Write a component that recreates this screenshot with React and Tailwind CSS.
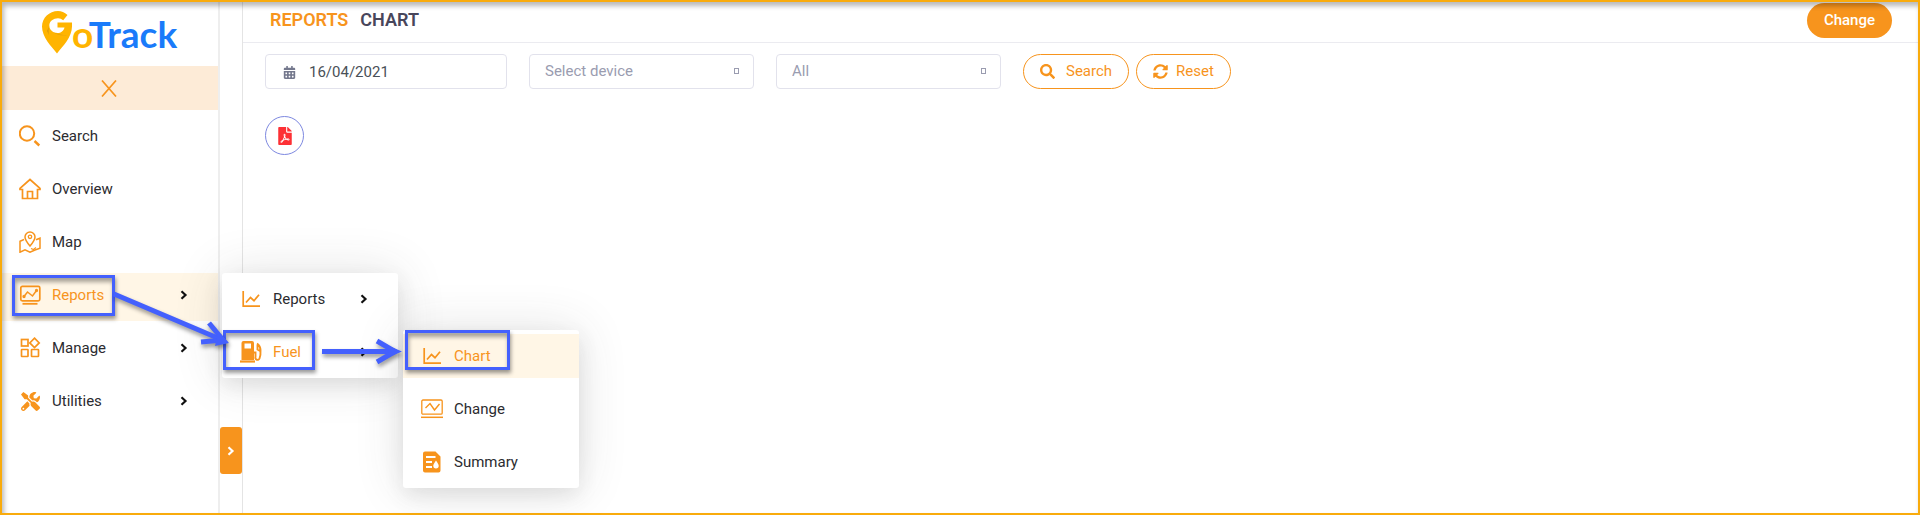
import React from "react";
import { FaSearch, FaSyncAlt, FaFilePdf, FaCalendarAlt, FaTools } from "react-icons/fa";

const Svg = ({ children, className = "", w = 22, h = 22 }) => (
  <svg width={w} height={h} viewBox={`0 0 ${w} ${h}`} fill="none" stroke="#f7941d" strokeWidth="1.700" className={`shrink-0 ${className}`} aria-hidden="true">
    {children}
  </svg>
);

const SearchIcon = () => (
  <Svg><circle cx="8" cy="8.500" r="7.200" strokeWidth="2" /><path d="M15.500 16l4.800 4.500" strokeWidth="2.400" /></Svg>
);
const HomeIcon = () => (
  <Svg><path d="M1 11.500v-1.200L11 1.500l10 8.800v1.200h-2.500V20.500h-15v-9H1z M8.500 20.500v-7h5v7" /></Svg>
);
const MapIcon = () => (
  <Svg>
    <path d="M11 15C8 11.500 6 8.800 6 6a5 5 0 0 1 10 0c0 2.800-2 5.500-5 9z" strokeWidth="1.500" />
    <circle cx="11" cy="5.800" r="1.700" strokeWidth="1.300" />
    <path d="M5 8.500L1 10.200v11l5-2.400 5 2.400 5-2.200 5-1.800V7.200l-4 1.600" strokeWidth="1.500" />
    <path d="M12 17.500l2.500 1 2.500-2" strokeWidth="1.100" />
  </Svg>
);
const MonitorIcon = () => (
  <Svg><rect x="1.800" y="2.300" width="19" height="14.500" rx="1.500" /><path d="M3.500 19.800h15" strokeWidth="1.800" /><path d="M5 12.500l3.500-4.500 5 4 4-5.500" strokeWidth="1.500" /><circle cx="5" cy="12.500" r=".8" fill="#f7941d" /><circle cx="17.500" cy="6.500" r=".8" fill="#f7941d" /></Svg>
);
const ManageIcon = () => (
  <Svg><rect x="2.500" y="2.500" width="6.500" height="6.500" /><path d="M15.500 1.200l4.700 4.700-4.700 4.700-4.700-4.700z" /><rect x="2.500" y="12.500" width="6.500" height="7" rx=".5" /><rect x="12.500" y="12.500" width="7" height="7" rx=".5" /></Svg>
);
const ToolsIcon = () => <span className="flex w-[22px] shrink-0 justify-center text-[19px] text-[#f7941d]"><FaTools aria-hidden="true" /></span>;
const ChartIcon = () => (
  <Svg><path d="M3.200 3v15.200H20" /><path d="M6 14.500l4.500-5 3.500 3.200 5-6" /></Svg>
);
const FuelIcon = () => (
  <Svg>
    <path fill="#f7941d" stroke="none" fillRule="evenodd" d="M3.500 0h8.500a2 2 0 0 1 2 2v17H1.500V2a2 2 0 0 1 2-2zM4.500 2.500v5h6.500v-5z" />
    <path d="M0 20.500h15" strokeWidth="2.200" />
    <path d="M14 11.500h1.500v4.500a2 2 0 0 0 4 1.500c.8-2 1.200-5 1-8.500 0-2-1-4.500-3.500-6.500M17.500 4v4.500l2.500 1.500" strokeWidth="1.900" />
  </Svg>
);
const ChangeIcon = () => (
  <Svg><rect x=".8" y="2" width="20.400" height="14.200" rx="1.200" strokeWidth="1.300" /><path d="M0 19.300h22" strokeWidth="1.500" /><path d="M4.500 10l4.500-4.500 4.500 6.500 5-6" strokeWidth="1.400" /></Svg>
);
const SummaryIcon = () => (
  <Svg>
    <path d="M4 .5h10.500l5 5V19.500a2 2 0 0 1-2 2H4a2 2 0 0 1-2-2V2.500a2 2 0 0 1 2-2z" fill="#f7941d" stroke="none" />
    <path d="M5 6h9.500M5 11h6M5 16h6" stroke="#fff" strokeWidth="1.800" />
    <path d="M15 9.500c1.800 2.600 2.700 4 2.700 5.300a2.700 2.700 0 0 1-5.400 0c0-1.300.9-2.700 2.700-5.300z" fill="#fff" stroke="none" />
  </Svg>
);
const Chevron = ({ color = "#111" }) => (
  <svg width="8" height="10" viewBox="0 0 8 10" fill="none" stroke={color} strokeWidth="2.200" className="shrink-0" aria-hidden="true">
    <path d="M1.500 1.200L5.500 5l-4 3.800" />
  </svg>
);

const Logo = () => (
  <a href="#" aria-label="GoTrack" className="flex h-16 items-start pt-2 pl-10 leading-none no-underline">
    <svg width="30" height="44" viewBox="0 0 30 44" aria-hidden="true" className="shrink-0">
      <path fill="#ffb400" d="M25.500 5C22.500 2.200 19.500 1 16 1 7.200 1 0 8 0 16.500 0 27 9 36 15 43.500 21 36 30 27 30 16.500V12.500H15.500v5h7c-.8 3.500-3.500 5.500-7 5.500-4.500 0-8.200-3.200-8.200-7.500S11.500 8.200 16 8.200c2 0 3.700.7 5.200 2z" />
      <path fill="#d99a10" d="M7.300 15.500c-.8 3-1 6.500-.3 9.500l-2-4zM11 22c4 2.500 9 3 14.500 3-5 .8-10.500.2-14.500-3z" />
    </svg>
    <span className="mt-1 font-[Lato,sans-serif] text-[37px] leading-10 font-bold text-[#1a7bfa]"><span className="text-[#ffb400]">o</span>Track</span>
  </a>
);

const itemText = "text-[15px] leading-5";

function NavItem({ icon, label, arrow, active, children }) {
  return (
    <li className="relative">
      <a href="#" className={`flex h-12 items-center gap-[11px] pr-[30px] pb-1 pl-[17px] ${itemText} ${active ? "bg-[#fff6e6] text-[#f7941d]" : "text-[#2b2b2f]"}`}>
        {icon}
        <span className="flex-1">{label}</span>
        {arrow && <Chevron />}
      </a>
      {children}
    </li>
  );
}

function SubItem({ icon, label, arrow, active, filled, children }) {
  return (
    <li className="relative">
      <a href="#" className={`flex h-11 items-center gap-[11px] pr-[30px] pl-[18px] ${itemText} ${filled ? "bg-[#fff6e6]" : ""} ${active ? "text-[#f7941d]" : "text-[#2b2b2f]"}`}>
        {icon}
        <span className="flex-1">{label}</span>
        {arrow && <Chevron />}
      </a>
      {children}
    </li>
  );
}

const menu = "absolute z-10 flex w-44 flex-col gap-[9px] rounded-[3px] bg-white py-1 shadow-[0_0_50px_rgba(60,60,60,0.14),0_8px_20px_rgba(60,60,60,0.1)]";

function SelectBox({ label, text }) {
  return (
    <div className="relative w-[225px]">
      <select aria-label={label} className="h-[35px] w-full appearance-none rounded border border-[#e2e2ec] bg-white px-[15px] text-[15px] text-[#9a9cb0]">
        <option>{text}</option>
      </select>
      <svg width="6" height="7" viewBox="0 0 6 7" className="pointer-events-none absolute top-[14px] right-[14px]" fill="none" stroke="#9a9cb0" aria-hidden="true">
        <rect x=".5" y=".5" width="4" height="5" />
      </svg>
    </div>
  );
}

const mark = "pointer-events-none absolute z-20 border-[3px] border-[#4460fd] shadow-[1px_3px_4px_rgba(0,0,0,0.4),inset_1px_4px_4px_rgba(0,0,0,0.35)]";
const pill = "flex h-[35px] items-center rounded-full border border-[#f7941d] bg-white text-[15px] text-[#f7941d]";

export default function App() {
  return (
    <div className="relative flex min-h-screen border-2 border-[#f9ab0c] bg-white font-[Roboto,sans-serif]">
      <aside className="w-[218px] shrink-0 border-r-2 border-[#eeeeee]">
        <Logo />
        <button type="button" aria-label="Close menu" className="flex h-11 w-full items-center justify-center bg-[#fdebd7] pr-0.5">
          <Svg w={16} h={17}><path d="M1 .5l14 16M15 .5L1 16.500" /></Svg>
        </button>
        <nav aria-label="Main">
          <ul className="flex flex-col gap-[5px] pt-1">
            <NavItem icon={<SearchIcon />} label="Search" />
            <NavItem icon={<HomeIcon />} label="Overview" />
            <NavItem icon={<MapIcon />} label="Map" />
            <NavItem icon={<MonitorIcon />} label="Reports" arrow active>
              <ul className={`${menu} top-0 left-[220px]`}>
                <SubItem icon={<ChartIcon />} label="Reports" arrow />
                <SubItem icon={<FuelIcon />} label="Fuel" arrow active>
                  <ul className={`${menu} top-0 left-[181px]`}>
                    <SubItem icon={<ChartIcon />} label="Chart" active filled />
                    <SubItem icon={<ChangeIcon />} label="Change" />
                    <SubItem icon={<SummaryIcon />} label="Summary" />
                  </ul>
                </SubItem>
              </ul>
            </NavItem>
            <NavItem icon={<ManageIcon />} label="Manage" arrow />
            <NavItem icon={<ToolsIcon />} label="Utilities" arrow />
          </ul>
        </nav>
      </aside>

      <div className="flex w-[23px] shrink-0 flex-col border-r border-[#e4e4e4]">
        <button type="button" aria-label="Expand panel" className="mt-auto mb-[39px] flex h-[47px] w-full items-center justify-center rounded-[3px] bg-[#f7941d]">
          <Chevron color="#fff" />
        </button>
      </div>

      <main className="min-w-0 flex-1">
        <header className="flex h-[41px] items-center justify-between border-b border-[#ebebf0] pr-[26px] pb-1 pl-[27px]">
          <h1 className="flex gap-3 text-lg leading-6 font-semibold">
            <span className="text-[#f7941d]">REPORTS</span>
            <span className="text-[#48465b]">CHART</span>
          </h1>
          <button type="button" className="h-[35px] rounded-full bg-[#f7941d] px-[17px] text-[15px] font-medium text-white">Change</button>
        </header>
        <form className="flex flex-wrap items-center gap-[22px] px-[22px] pt-[11px]">
          <div className="relative w-[242px]">
            <FaCalendarAlt className="absolute top-[12px] left-[18px] text-[13px] text-[#74788d]" aria-hidden="true" />
            <input type="text" aria-label="Date" defaultValue="16/04/2021" className="h-[35px] w-full rounded border border-[#e2e2ec] bg-white pr-3 pl-[43px] text-[15px] text-[#495057]" />
          </div>
          <SelectBox label="Device" text="Select device" />
          <SelectBox label="Type" text="All" />
          <div className="flex gap-[7px]">
            <button type="button" className={`${pill} gap-[11px] px-4`}><FaSearch aria-hidden="true" />Search</button>
            <button type="button" className={`${pill} gap-2 px-4`}><FaSyncAlt aria-hidden="true" />Reset</button>
          </div>
        </form>
        <div className="px-[22px] pt-[27px]">
          <button type="button" aria-label="Export PDF" className="flex size-[39px] items-center justify-center rounded-full border border-[#7d88e0] text-[18px] text-[#fd3035]">
            <FaFilePdf aria-hidden="true" />
          </button>
        </div>
      </main>

      <div className={`${mark} top-[273px] left-[10px] h-[41px] w-[103px]`} />
      <div className={`${mark} top-[328px] left-[221px] h-10 w-[92px]`} />
      <div className={`${mark} top-[328px] left-[403px] h-10 w-[105px]`} />
      <svg width="420" height="120" viewBox="0 270 420 120" fill="none" stroke="#4460fd" strokeWidth="5" className="pointer-events-none absolute top-[268px] -left-[2px] z-20 drop-shadow-[1px_3px_2px_rgba(0,0,0,0.4)]" aria-hidden="true">
        <path d="M114 294L220 339M322 351.500h74" />
        <path d="M209 323l14 17-22 2M377 341l18 10.500-18 10.500" />
        <path d="M218 332l11 11-14 3zM389 346l13 5.500-13 5.500z" fill="#4460fd" stroke="none" />
      </svg>
      <div className="pointer-events-none absolute inset-0 z-30 shadow-[inset_2px_4px_5px_rgba(0,0,0,0.28)]" />
    </div>
  );
}
